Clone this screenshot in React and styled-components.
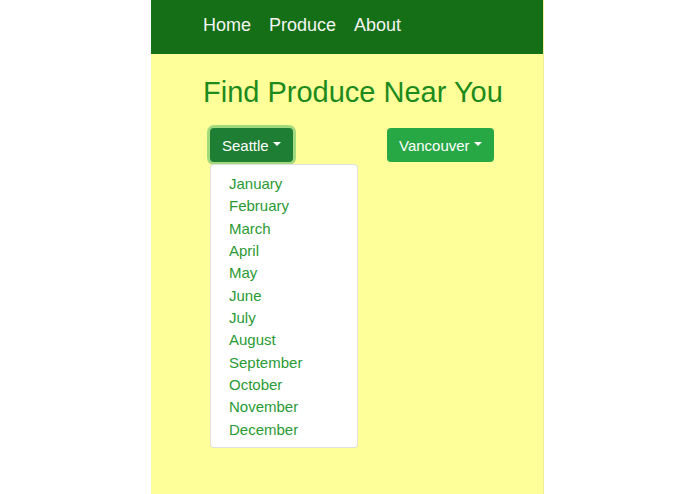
import React from "react";
import styled, { createGlobalStyle } from "styled-components";

const GlobalStyle = createGlobalStyle`
  html, body {
    margin: 0;
    padding: 0;
    background: #ffffff;
  }
  body {
    font-family: "Liberation Sans", Arial, Helvetica, sans-serif;
  }
  * { box-sizing: border-box; }
`;

const Screen = styled.div`
  width: 393px;
  min-height: 494px;
  margin: 0 auto;
  background: #ffff99;
  border-right: 1px solid #efef9a;
  display: flex;
  flex-direction: column;
`;

const NavBar = styled.nav`
  height: 54px;
  background: #146f16;
  display: flex;
  align-items: center;
  gap: 18px;
  padding: 0 0 3px 52px;
`;

const NavLink = styled.a`
  color: #f4f4f4;
  font-size: 18px;
  text-decoration: none;
  line-height: 1.15;
`;

const Main = styled.main`
  padding: 21px 0 0 52px;
  display: flex;
  flex-direction: column;
`;

const Title = styled.h1`
  margin: 0;
  font-size: 29px;
  font-weight: 400;
  line-height: 34px;
  color: #1c8a1c;
`;

const ButtonRow = styled.div`
  margin-top: 19px;
  padding-left: 7px;
  display: flex;
  align-items: flex-start;
`;

const DropdownWrap = styled.div`
  position: relative;
  width: ${(p) => p.$width}px;
`;

const CityButton = styled.button`
  height: 34px;
  padding: 0 12px;
  border: none;
  border-radius: 4px;
  font-family: inherit;
  font-size: 15px;
  color: #ffffff;
  background: ${(p) => (p.$active ? "#1e7e34" : "#28a745")};
  box-shadow: ${(p) =>
    p.$active ? "0 0 0 3px rgba(72, 180, 97, 0.5)" : "none"};
  display: inline-flex;
  align-items: center;
  white-space: nowrap;
  cursor: pointer;
`;

const Caret = styled.span`
  display: inline-block;
  margin-left: 4.5px;
  margin-top: -3px;
  width: 0;
  height: 0;
  border-top: 4.5px solid #ffffff;
  border-left: 4.5px solid transparent;
  border-right: 4.5px solid transparent;
`;

const Menu = styled.ul`
  position: absolute;
  top: 36px;
  left: 0;
  width: 148px;
  margin: 0;
  padding: 8px 0 6px;
  list-style: none;
  background: #ffffff;
  border: 1px solid rgba(0, 0, 0, 0.12);
  border-radius: 4px;
`;

const MenuItem = styled.li`
  padding: 0 18px;
  font-size: 15px;
  line-height: 22.35px;
  color: #2a9a34;
  white-space: nowrap;
`;

const months = [
  "January",
  "February",
  "March",
  "April",
  "May",
  "June",
  "July",
  "August",
  "September",
  "October",
  "November",
  "December",
];

export default function App() {
  return (
    <>
      <GlobalStyle />
      <Screen>
        <NavBar>
          <NavLink href="#">Home</NavLink>
          <NavLink href="#">Produce</NavLink>
          <NavLink href="#">About</NavLink>
        </NavBar>
        <Main>
          <Title>Find Produce Near You</Title>
          <ButtonRow>
            <DropdownWrap $width={177}>
              <CityButton $active>
                Seattle
                <Caret />
              </CityButton>
              <Menu>
                {months.map((m) => (
                  <MenuItem key={m}>{m}</MenuItem>
                ))}
              </Menu>
            </DropdownWrap>
            <DropdownWrap $width={110}>
              <CityButton>
                Vancouver
                <Caret />
              </CityButton>
            </DropdownWrap>
          </ButtonRow>
        </Main>
      </Screen>
    </>
  );
}
